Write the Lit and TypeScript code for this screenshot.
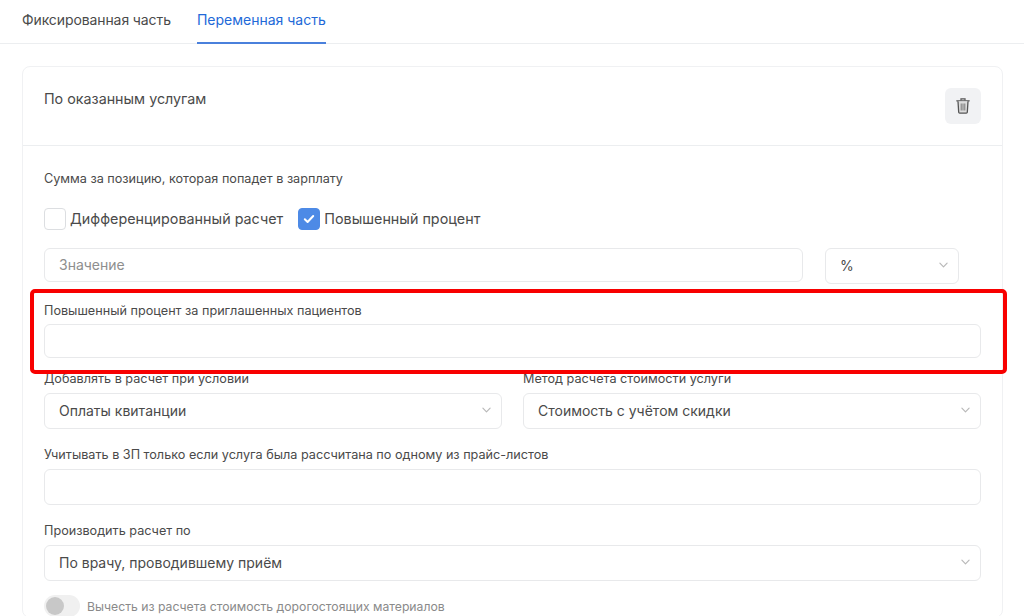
import { LitElement, html, css } from "lit";
import { customElement } from "lit/decorators.js";

const chevron = html`<svg class="chev" width="9" height="6" viewBox="0 0 10 6" fill="none"><path d="M1 1l4 4 4-4" stroke="#b8b8b8" stroke-width="1.3" stroke-linecap="round" stroke-linejoin="round"/></svg>`;

@customElement("app-root")
export class AppRoot extends LitElement {
  static styles = css`
    :host { display: block; position: relative; height: 616px; overflow: hidden; background: #fff; font-family: Inter, "Noto Sans", sans-serif; color: #4a4a4a; }
    * { box-sizing: border-box; }
    .tabs { display: flex; gap: 26px; height: 44px; padding-left: 22px; border-bottom: 1px solid #eceef0; font-size: 14px; }
    .tab { height: 44px; line-height: 40px; color: #4a4a4a; }
    .tab.first { letter-spacing: -0.1px; }
    .tab.active { color: #2269d8; border-bottom: 2px solid #4a80dc; }
    .card { margin: 22px 21px 0 22px; border: 1px solid #f0f1f3; border-radius: 8px; }
    .head { display: flex; justify-content: space-between; height: 79px; padding: 21px 21px 0 21px; border-bottom: 1px solid #eceef0; font-size: 14.3px; line-height: 22px; }
    .trash { width: 36px; height: 36px; border-radius: 6px; background: #f1f2f4; display: flex; align-items: center; justify-content: center; }
    .body { padding: 25px 21px 0; display: flex; flex-direction: column; }
    .label { font-size: 12.65px; line-height: 16px; color: #4a4a4a; }
    .checks { display: flex; align-items: center; margin-top: 21px; height: 22px; font-size: 14.35px; }
    .checks span:not(.box) { padding-bottom: 2px; }
    .box { width: 22px; height: 22px; border: 1px solid #dcdee1; border-radius: 4px; margin-right: 4px; background: #fff; display: flex; align-items: center; justify-content: center; }
    .box.on { background: #4d8ae6; border-color: #4d8ae6; margin-left: 15px; }
    .value-row { display: flex; align-items: flex-start; gap: 22px; margin-top: 18px; }
    .field { border: 1px solid #e8e9eb; border-radius: 6px; background: #fff; height: 34px; display: flex; align-items: center; padding: 0 14px 2px; font-size: 14px; }
    .value-row .field:first-child { width: 759px; }
    .placeholder { color: #8e8e8e; }
    .select { height: 36px; justify-content: space-between; }
    .unit { width: 134px; }
    .chev { flex: none; margin-right: -4px; }
    .mt-patient { margin-top: 19px; }
    .gap6 { margin-top: 5px; }
    .two { display: grid; grid-template-columns: 458px 458px; gap: 21px; margin-top: 13px; }
    .two .label { display: block; margin-bottom: 6px; }
    .mt-price { margin-top: 18px; }
    .price-input { height: 36px; margin-top: 6px; }
    .mt-calc { margin-top: 18px; }
    .gap7 { margin-top: 6px; }
    .toggle-row { display: flex; align-items: center; margin-top: 14px; height: 22px; font-size: 12.22px; color: #8a8a8a; }
    .toggle { width: 36px; height: 22px; border-radius: 11px; background: #f0f0f0; margin-right: 7px; padding: 2px; }
    .knob { width: 18px; height: 18px; border-radius: 50%; background: #c8c8c8; }
    .mark { position: absolute; left: 30px; top: 289px; width: 977px; height: 85px; border: 4px solid #f80000; border-radius: 5px; pointer-events: none; }
  `;

  render() {
    return html`
      <div class="tabs">
        <div class="tab first">Фиксированная часть</div>
        <div class="tab active">Переменная часть</div>
      </div>
      <div class="card">
        <div class="head">
          <div>По оказанным услугам</div>
          <div class="trash">
            <svg width="14" height="16" viewBox="0 0 14 16" fill="none">
              <path d="M5 1.600V.9h4v.7M.8 2.800h12.400" stroke="#555" stroke-width="1.300" stroke-linecap="round"/>
              <path d="M2 3.200l.7 11a1 1 0 0 0 1 .9h6.600a1 1 0 0 0 1-.9l.7-11" stroke="#555" stroke-width="1.300" fill="#ddd"/>
              <path d="M5.200 5.500v7M7 5.500v7M8.800 5.500v7" stroke="#777" stroke-width="1"/>
            </svg>
          </div>
        </div>
        <div class="body">
          <div class="label">Сумма за позицию, которая попадет в зарплату</div>
          <div class="checks">
            <span class="box"></span><span>Дифференцированный расчет</span>
            <span class="box on">
              <svg width="12" height="10" viewBox="0 0 12 10" fill="none"><path d="M1.800 5.200l2.800 2.800 5.600-6" stroke="#fff" stroke-width="2" stroke-linecap="round" stroke-linejoin="round"/></svg>
            </span><span>Повышенный процент</span>
          </div>
          <div class="value-row">
            <div class="field placeholder">Значение</div>
            <div class="field select unit"><span>%</span>${chevron}</div>
          </div>
          <div class="label mt-patient">Повышенный процент за приглашенных пациентов</div>
          <div class="field gap6"></div>
          <div class="two">
            <div>
              <span class="label">Добавлять в расчет при условии</span>
              <div class="field select"><span>Оплаты квитанции</span>${chevron}</div>
            </div>
            <div>
              <span class="label">Метод расчета стоимости услуги</span>
              <div class="field select"><span>Стоимость с учётом скидки</span>${chevron}</div>
            </div>
          </div>
          <div class="label mt-price">Учитывать в ЗП только если услуга была рассчитана по одному из прайс-листов</div>
          <div class="field price-input"></div>
          <div class="label mt-calc">Производить расчет по</div>
          <div class="field select gap7"><span>По врачу, проводившему приём</span>${chevron}</div>
          <div class="toggle-row">
            <div class="toggle"><div class="knob"></div></div>
            <span>Вычесть из расчета стоимость дорогостоящих материалов</span>
          </div>
        </div>
      </div>
      <div class="mark"></div>
    `;
  }
}
